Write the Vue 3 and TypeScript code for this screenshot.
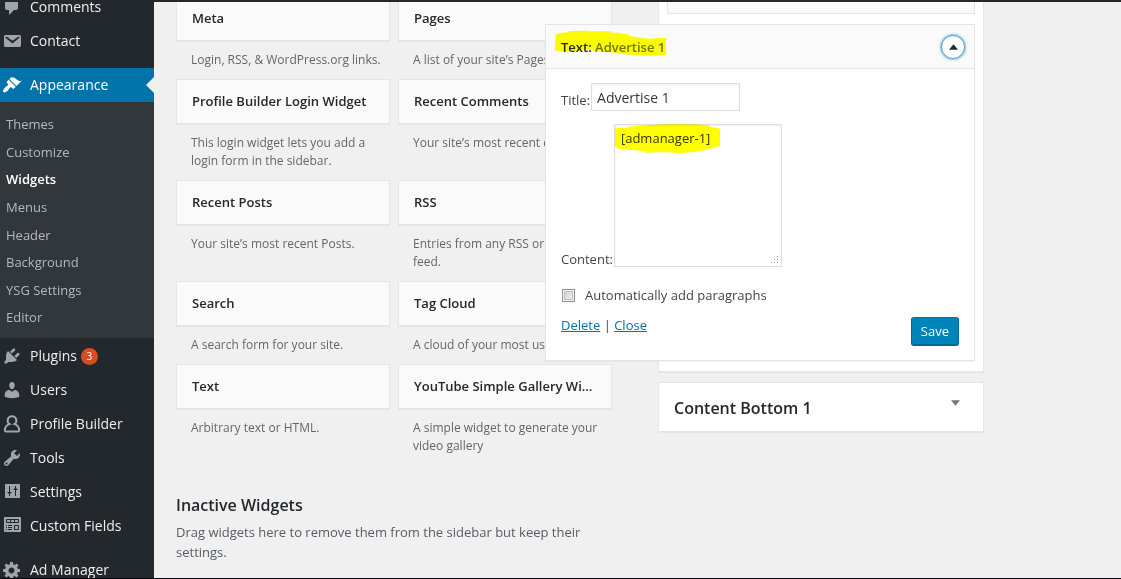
<script setup lang="ts">
import { ref } from 'vue'

interface Icon {
  fill?: string
  line?: string
  cut?: string
}

interface MenuItem {
  label: string
  icon: Icon
  count?: number
  current?: boolean
  spaced?: boolean
  children?: string[]
}

interface Widget {
  title: string
  description: string
}

const menu: MenuItem[] = [
  {
    label: 'Comments',
    icon: { fill: 'M5 2h9c1.1 0 2 .9 2 2v7c0 1.1-.9 2-2 2h-2l-5 5v-5H5c-1.1 0-2-.9-2-2V4c0-1.1.9-2 2-2z' },
  },
  {
    label: 'Contact',
    icon: {
      fill: 'M3.87 4h13.25C18.37 4 19 4.59 19 5.79v8.42c0 1.19-.63 1.79-1.88 1.79H3.87c-1.25 0-1.88-.6-1.88-1.79V5.79c0-1.2.63-1.79 1.88-1.79zm6.62 8.6l6.74-5.53c.24-.2.43-.66.13-1.07-.29-.41-.82-.42-1.17-.17l-5.7 3.86L4.8 5.83c-.35-.25-.88-.24-1.17.17-.3.41-.11.87.13 1.07z',
    },
  },
  {
    label: 'Appearance',
    current: true,
    spaced: true,
    icon: {
      fill: 'M14.48 11.06L7.41 3.99l1.5-1.5c.5-.56 2.3-.47 3.51.32 1.21.8 1.43 1.28 2.91 2.1 1.18.64 2.45 1.26 4.45.85zm-.71.71L6.7 4.7 4.93 6.47c-.39.39-.39 1.02 0 1.41l1.06 1.06c.39.39.39 1.03 0 1.42-.6.6-1.43 1.11-2.21 1.69-.35.26-.7.53-1.01.84C1.43 14.23.4 16.08 1.4 17.07c.99 1 2.84-.03 4.18-1.36.31-.31.58-.66.85-1.02.57-.78 1.08-1.61 1.69-2.21.39-.39 1.02-.39 1.41 0l1.06 1.06c.39.39 1.02.39 1.41 0z',
    },
    children: ['Themes', 'Customize', 'Widgets', 'Menus', 'Header', 'Background', 'YSG Settings', 'Editor'],
  },
  {
    label: 'Plugins',
    count: 3,
    icon: {
      fill: 'M13.11 4.36L9.87 7.6 8 5.73l3.24-3.24c.35-.34 1.05-.2 1.56.32.52.51.66 1.21.31 1.55zm-8 1.77l.91-1.12 9.01 9.01-1.19.84c-.71.71-2.63 1.16-3.82 1.16H6.14L4.9 17.26c-.59.59-1.54.59-2.12 0-.59-.58-.59-1.53 0-2.12l1.24-1.24v-3.88c0-1.13.4-3.19 1.09-3.89zm7.26 3.97l3.24-3.24c.34-.35 1.04-.21 1.55.31.52.51.66 1.21.31 1.55l-3.24 3.25z',
    },
  },
  {
    label: 'Users',
    icon: {
      fill: 'M10 9.25c-2.27 0-2.73-3.44-2.73-3.44C7 4.02 7.82 2 9.97 2c2.16 0 2.98 2.02 2.71 3.81 0 0-.41 3.44-2.68 3.44zm0 2.57L12.72 10c2.39 0 4.52 2.33 4.52 4.53v2.49s-3.65 1.13-7.24 1.13c-3.65 0-7.24-1.13-7.24-1.13v-2.49c0-2.25 1.94-4.48 4.47-4.48z',
    },
  },
  {
    label: 'Profile Builder',
    icon: { line: 'M10 2.2a4.3 4.3 0 0 1 2.4 7.9c2.8.9 4.8 3.4 4.8 6.1 0 .8-.4 1.3-1.2 1.3H4c-.8 0-1.2-.5-1.2-1.3 0-2.7 2-5.2 4.8-6.1A4.3 4.3 0 0 1 10 2.2z' },
  },
  {
    label: 'Tools',
    icon: {
      fill: 'M16.68 9.77c-1.34 1.34-3.3 1.67-4.95.99l-5.41 6.52c-.99.99-2.59.99-3.58 0s-.99-2.59 0-3.57l6.52-5.42c-.68-1.65-.35-3.61.99-4.95 1.28-1.28 3.12-1.62 4.72-1.06l-2.89 2.89 2.82 2.82 2.86-2.87c.53 1.58.18 3.39-1.08 4.65zM3.81 16.21c.4.39 1.04.39 1.43 0 .4-.4.4-1.04 0-1.43-.39-.4-1.03-.4-1.43 0-.39.39-.39 1.03 0 1.43z',
    },
  },
  {
    label: 'Settings',
    icon: {
      fill: 'M4 2h13c.6 0 1 .4 1 1v12c0 .6-.4 1-1 1H4c-.6 0-1-.4-1-1V3c0-.6.4-1 1-1z',
      cut: 'M7.5 4v10M5.5 10.5h4M6.5 11.5h2M13.5 4v10M11.5 7.5h4M12.5 6.5h2',
    },
  },
  {
    label: 'Custom Fields',
    icon: {
      fill: 'M3 1h15c.6 0 1 .4 1 1v13c0 .6-.4 1-1 1H3c-.6 0-1-.4-1-1V2c0-.6.4-1 1-1z',
      cut: 'M4.5 3.5h12v3h-12zM8.5 3.5v3M12.5 3.5v3M4 9.5h1M6 9.5h4M4 11.5h1M6 11.5h4M4 13.5h1M6 13.5h4M12.5 9.5h4v4h-4z',
    },
  },
  {
    label: 'Ad Manager',
    spaced: true,
    icon: {
      fill: 'M18 12h-2.18c-.17.7-.44 1.35-.81 1.93l1.54 1.54-2.1 2.1-1.54-1.54c-.58.36-1.23.63-1.91.79V19H8v-2.18c-.68-.16-1.33-.43-1.91-.79l-1.54 1.54-2.12-2.12 1.54-1.54c-.36-.58-.63-1.23-.79-1.91H1V9.03h2.17c.16-.7.44-1.35.8-1.94L2.43 5.55l2.1-2.1 1.54 1.54c.58-.37 1.24-.64 1.93-.81V2h3v2.18c.68.16 1.33.43 1.91.79l1.54-1.54 2.12 2.12-1.54 1.54c.36.59.64 1.24.8 1.94H18V12zm-8.5 1.5c1.66 0 3-1.34 3-3s-1.34-3-3-3-3 1.34-3 3 1.34 3 3 3z',
    },
  },
]

const widgets: Widget[] = [
  { title: 'Meta', description: 'Login, RSS, & WordPress.org links.' },
  { title: 'Pages', description: 'A list of your site’s Pages.' },
  { title: 'Profile Builder Login Widget', description: 'This login widget lets you add a login form in the sidebar.' },
  { title: 'Recent Comments', description: 'Your site’s most recent comments.' },
  { title: 'Recent Posts', description: 'Your site’s most recent Posts.' },
  { title: 'RSS', description: 'Entries from any RSS or Atom feed.' },
  { title: 'Search', description: 'A search form for your site.' },
  { title: 'Tag Cloud', description: 'A cloud of your most used tags.' },
  { title: 'Text', description: 'Arbitrary text or HTML.' },
  { title: 'YouTube Simple Gallery Widget', description: 'A simple widget to generate your video gallery' },
]

const title = ref('Advertise 1')
const content = ref('[admanager-1]')
const paragraphs = ref(false)
</script>

<template>
  <div class="page">
    <div class="topbar"></div>
    <div class="body">
      <nav class="sidebar">
        <ul class="menu">
          <li v-for="item in menu" :key="item.label" :class="{ current: item.current, spaced: item.spaced }">
            <a href="#" class="menu-link">
              <svg class="menu-icon" viewBox="0 0 20 20" aria-hidden="true">
                <path v-if="item.icon.fill" class="fill" :d="item.icon.fill" />
                <path v-if="item.icon.line" class="line" :d="item.icon.line" />
                <path v-if="item.icon.cut" class="cut" :d="item.icon.cut" />
              </svg>
              <span>{{ item.label }}</span>
              <span v-if="item.count" class="count">{{ item.count }}</span>
            </a>
            <ul v-if="item.children" class="submenu">
              <li v-for="child in item.children" :key="child">
                <a href="#" :class="{ active: child === 'Widgets' }">{{ child }}</a>
              </li>
            </ul>
          </li>
        </ul>
      </nav>

      <main class="content">
        <section class="available">
          <div class="widget-grid">
            <article v-for="w in widgets" :key="w.title" class="widget">
              <h3 class="widget-title">{{ w.title }}</h3>
              <p class="widget-desc">{{ w.description }}</p>
            </article>
          </div>
          <h2 class="inactive-title">Inactive Widgets</h2>
          <p class="inactive-desc">Drag widgets here to remove them from the sidebar but keep their settings.</p>
        </section>

        <section class="areas">
          <div class="area">
            <div class="closed-widget"></div>
            <form class="open-widget" @submit.prevent>
              <header class="open-head">
                <h3>Text: <span>Advertise 1</span></h3>
                <svg class="marker marker-head" viewBox="45 90 336 78" aria-hidden="true">
                  <path d="M47 104L60 99 85 97 87 93 145 92 147 94H213V98H240V102H265V107L285 110 310 115 335 117 345 115 378 114V165L330 167 250 163 215 157 160 153 155 148 130 150 125 153H45z" />
                </svg>
                <button type="button" class="toggle" aria-label="Toggle widget">
                  <svg viewBox="0 0 10 6" aria-hidden="true"><path d="M5 0l5 6H0z" /></svg>
                </button>
              </header>
              <div class="open-body">
                <div class="field">
                  <label for="widget-title">Title:</label>
                  <input id="widget-title" v-model="title" type="text" />
                </div>
                <div class="field field-content">
                  <label for="widget-content">Content:</label>
                  <div class="text-wrap">
                    <textarea id="widget-content" v-model="content" spellcheck="false"></textarea>
                    <svg class="marker marker-content" viewBox="219 372 321 90" aria-hidden="true">
                      <path d="M222 383H260L262 380 315 376 370 373H460L500 376 510 381 532 384 537 388V438L520 441 510 446 480 452 450 457 420 459 375 457H345L315 459V454L270 450 235 447 222 440z" />
                    </svg>
                    <svg class="grip" viewBox="0 0 9 9" aria-hidden="true">
                      <path d="M7 0h1v1H7zM7 3h1v1H7zM4 3h1v1H4zM7 6h1v1H7zM4 6h1v1H4zM1 6h1v1H1z" />
                    </svg>
                  </div>
                </div>
                <div class="check">
                  <input id="widget-paragraphs" v-model="paragraphs" type="checkbox" />
                  <label for="widget-paragraphs">Automatically add paragraphs</label>
                </div>
                <div class="actions">
                  <p><a href="#">Delete</a> | <a href="#">Close</a></p>
                  <button type="submit" class="save">Save</button>
                </div>
              </div>
            </form>
          </div>
          <div class="area area-closed">
            <h2>Content Bottom 1</h2>
            <svg viewBox="0 0 10 6" aria-hidden="true"><path d="M0 0h10L5 6z" /></svg>
          </div>
        </section>
      </main>
    </div>
    <div class="bottombar"></div>
  </div>
</template>

<style>
body {
  margin: 0;
  background: #f0f0f0;
}
</style>

<style scoped>
* {
  box-sizing: border-box;
}

.page {
  display: flex;
  flex-direction: column;
  height: 100vh;
  overflow: hidden;
  background: #f0f0f0;
  color: #444;
  font-family: "Open Sans", "Noto Sans", sans-serif;
  font-size: 13px;
  line-height: 20px;
}

h2,
h3,
p,
ul {
  margin: 0;
  padding: 0;
}

ul {
  list-style: none;
}

.topbar {
  flex: none;
  height: 2px;
  background: #23282d;
}

.bottombar {
  flex: none;
  height: 1px;
  background: #05060c;
}

.body {
  display: flex;
  flex: 1;
  min-height: 0;
  overflow: hidden;
}

.sidebar {
  flex: none;
  width: 154px;
  background: #23282d;
}

.menu {
  margin-top: -12px;
}

.spaced {
  margin-top: 10px;
}

.menu-link {
  display: flex;
  align-items: center;
  height: 34px;
  padding-left: 2px;
  color: #eee;
  font-size: 14px;
  text-decoration: none;
}

.menu-icon {
  width: 20px;
  height: 20px;
  margin-right: 8px;
}

.fill {
  fill: #a0a5aa;
}

.line {
  fill: none;
  stroke: #a0a5aa;
  stroke-width: 2;
}

.cut {
  fill: none;
  stroke: #23282d;
  stroke-width: 1;
}

.current > .menu-link {
  position: relative;
  background: #0073aa;
  color: #fff;
}

.current .fill {
  fill: #fff;
}

.current > .menu-link::after {
  content: "";
  position: absolute;
  top: 9px;
  right: 0;
  border: 8px solid transparent;
  border-left-width: 0;
  border-right-color: #f0f0f0;
}

.count {
  width: 17px;
  height: 17px;
  margin-left: 4px;
  border-radius: 9px;
  background: #d54e21;
  color: #fff;
  font-size: 10px;
  line-height: 17px;
  text-align: center;
}

.submenu {
  display: grid;
  grid-template-rows: repeat(8, 1fr);
  height: 236px;
  margin-bottom: 1px;
  padding: 9px 6px 6px;
  background: #32373c;
}

.submenu a {
  display: block;
  color: #b4b9be;
  line-height: 27px;
  text-decoration: none;
}

.submenu .active {
  color: #fff;
  font-weight: 600;
}

.content {
  display: flex;
  flex: 1;
  align-items: flex-start;
  gap: 46px;
  min-width: 0;
  padding: 0 137px 0 22px;
}

.available {
  flex: 436 1 0;
  min-width: 0;
}

.widget-grid {
  display: grid;
  grid-template-columns: 1fr 1fr;
  column-gap: 8px;
  margin-top: -6px;
}

.widget {
  min-width: 0;
}

.widget-title {
  overflow: hidden;
  height: 45px;
  padding: 0 15px;
  border: 1px solid #e5e5e5;
  background: #fafafa;
  box-shadow: 0 1px 1px rgba(0, 0, 0, 0.04);
  color: #23282d;
  font-size: 13px;
  font-weight: 600;
  line-height: 43px;
  text-overflow: ellipsis;
  white-space: nowrap;
}

.widget-desc {
  padding: 10px 6px 10px 15px;
  color: #666;
  font-size: 12px;
  line-height: 18px;
}

.inactive-title {
  margin-top: 28px;
  color: #23282d;
  font-size: 16px;
  font-weight: 600;
  line-height: 24px;
}

.inactive-desc {
  margin-top: 5px;
  color: #555d66;
}

.areas {
  flex: 326 1 0;
  min-width: 0;
}

.area {
  margin-bottom: 10px;
  padding: 0 8px 10px;
  border: 1px solid #e5e5e5;
  border-top: 0;
  background: #fff;
  box-shadow: 0 1px 1px rgba(0, 0, 0, 0.04);
}

.closed-widget {
  height: 12px;
  margin-bottom: 10px;
  border: 1px solid #e5e5e5;
  border-top: 0;
  background: #fafafa;
}

.open-widget {
  position: relative;
  margin-left: -122px;
  border: 1px solid #e5e5e5;
  background: #fff;
  box-shadow: 0 1px 1px rgba(0, 0, 0, 0.04);
}

.open-head {
  position: relative;
  display: flex;
  align-items: center;
  justify-content: space-between;
  height: 44px;
  padding: 0 9px 0 15px;
  border-bottom: 1px solid #e5e5e5;
  background: #fafafa;
}

.open-head h3 {
  color: #23282d;
  font-size: 13px;
  font-weight: 600;
}

.open-head span {
  color: #72777c;
}

.marker {
  position: absolute;
  fill: #ff0;
  mix-blend-mode: multiply;
  pointer-events: none;
}

.marker-head {
  top: 5px;
  left: 9px;
  width: 112px;
}

.marker-content {
  top: 0;
  left: 0;
  width: 107px;
}

.toggle {
  display: flex;
  align-items: center;
  justify-content: center;
  width: 24px;
  height: 24px;
  padding: 0;
  border: 1px solid #5b9dd9;
  border-radius: 12px;
  background: #fff;
  box-shadow: 0 0 2px 1px rgba(30, 140, 190, 0.5);
}

.toggle svg {
  width: 9px;
  height: 6px;
  fill: #23282d;
}

.open-body {
  padding: 14px 15px;
}

.field {
  display: flex;
  align-items: center;
  gap: 1px;
  margin-bottom: 13px;
}

.field input {
  width: 149px;
  height: 28px;
  padding: 2px 5px;
  border: 1px solid #ddd;
  background: #fff;
  box-shadow: inset 0 1px 2px rgba(0, 0, 0, 0.07);
  color: #32373c;
  font: inherit;
  font-size: 14px;
}

.field label {
  padding-top: 6px;
}

.field-content {
  align-items: flex-end;
  margin-bottom: 18px;
}

.field-content label {
  line-height: 16px;
}

.text-wrap {
  position: relative;
  isolation: isolate;
}

textarea {
  display: block;
  width: 168px;
  height: 143px;
  padding: 3px 6px;
  border: 1px solid #ddd;
  border-radius: 0;
  background: #fff;
  box-shadow: inset 0 1px 2px rgba(0, 0, 0, 0.07);
  color: #32373c;
  font: inherit;
  resize: none;
}

.grip {
  position: absolute;
  right: 3px;
  bottom: 2px;
  width: 9px;
  height: 9px;
  fill: #999;
}

.check {
  display: flex;
  align-items: center;
  gap: 9px;
  margin-bottom: 10px;
}

.check input {
  appearance: none;
  width: 13px;
  height: 13px;
  margin: 0 1px;
  border: 1px solid #8e8f8f;
  background: linear-gradient(135deg, #c8ccd2, #f6f6f6);
  box-shadow: inset 0 0 0 1px #f4f4f4, inset 0 0 0 2px #bbbfc4;
}

.check input:checked {
  background: #0073aa;
}

.actions {
  display: flex;
  justify-content: space-between;
}

.actions a {
  color: #0073aa;
}

.save {
  height: 29px;
  margin-top: 2px;
  padding: 0 9px 1px;
  border: 1px solid #006799;
  border-color: #0073aa #006799 #006799;
  border-radius: 3px;
  background: #0085ba;
  box-shadow: inset 0 -1px 0 #006799;
  color: #fff;
  font: inherit;
}

.area-closed {
  display: flex;
  align-items: center;
  justify-content: space-between;
  height: 50px;
  padding: 2px 23px 0 15px;
  border-top: 1px solid #e5e5e5;
}

.area-closed h2 {
  color: #23282d;
  font-size: 16px;
  font-weight: 600;
}

.area-closed svg {
  width: 9px;
  height: 6px;
  margin-bottom: 10px;
  fill: #72777c;
}
</style>
